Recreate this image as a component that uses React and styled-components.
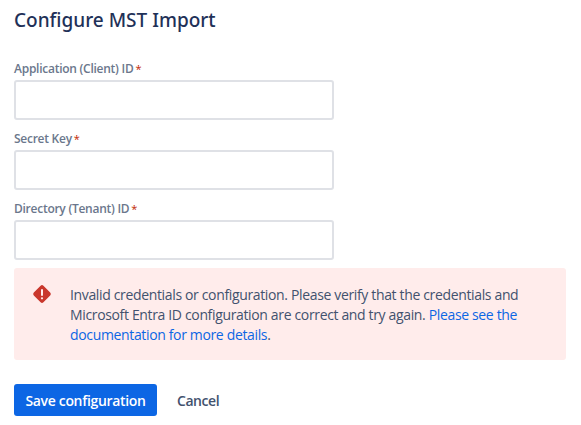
import React from "react";
import styled, { createGlobalStyle } from "styled-components";

const Global = createGlobalStyle`
  html, body { margin: 0; padding: 0; background: #fff; }
  body { font-family: "Open Sans", "Noto Sans", sans-serif; font-size: 14px; color: #172b4d; overflow: hidden; }
`;
const Page = styled.div`
  width: 581px; height: 425px; box-sizing: border-box; padding: 8px 15px 0 14px; display: flex; flex-direction: column;
`;
const Title = styled.h1`
  margin: 0 0 29px; font-size: 19px; line-height: 24px; font-weight: 500; color: #1f3158; font-family: "Noto Sans", sans-serif;
`;
const Form = styled.form`
  display: flex; flex-direction: column; gap: 11px; margin-bottom: 8px;
`;
const Field = styled.div`
  display: flex; flex-direction: column;
`;
const Label = styled.label`
  font-size: 12px; line-height: 16px; font-weight: 600; color: #6b778c; margin-bottom: 3px; letter-spacing: -0.26px;
`;
const Star = styled.span`
  color: #bf2600; margin-left: 2px; font-weight: 400; font-size: 11px;
`;
const Input = styled.input`
  width: 320px; height: 40px; box-sizing: border-box; border: 2px solid #dfe1e6; border-radius: 3px; background: #fff; outline: none; padding: 0 6px;
`;
const Alert = styled.div`
  display: flex; gap: 16px; height: 92px; box-sizing: border-box; padding: 14px 16px; border-radius: 3px; background: #ffeceb;
`;
const IconSlot = styled.div`
  width: 24px; height: 24px; flex: none;
`;
const Message = styled.p`
  margin: 0; padding-top: 3px; font-size: 14px; line-height: 20px; color: #42526e; letter-spacing: -0.35px;
`;
const DocLink = styled.a`
  color: #0c66e4; text-decoration: none;
`;
const Actions = styled.div`
  display: flex; align-items: center; gap: 4px; margin-top: 24px;
`;
const Primary = styled.button`
  height: 32px; width: 143px; padding: 0; border: 0; border-radius: 3px; background: #0c66e4; color: #fff; font: 600 14px "Open Sans", sans-serif; letter-spacing: -0.33px;
`;
const Subtle = styled.button`
  height: 32px; padding: 0 12px 0 16px; border: 0; border-radius: 3px; background: transparent; color: #42526e; font: 600 14px "Open Sans", sans-serif; letter-spacing: -0.45px;
`;

const fields = ["Application (Client) ID", "Secret Key", "Directory (Tenant) ID"];

export default function App() {
  return (
    <Page>
      <Global />
      <Title>Configure MST Import</Title>
      <Form>
        {fields.map((f) => (
          <Field key={f}>
            <Label>{f}<Star>*</Star></Label>
            <Input />
          </Field>
        ))}
      </Form>
      <Alert>
        <IconSlot>
          <svg width="24" height="24" viewBox="0 0 24 24">
            <path fill="#c9372c" fillRule="evenodd" d="M13.41 3.81l6.78 6.78a2 2 0 0 1 0 2.82l-6.78 6.78a2 2 0 0 1-2.82 0l-6.78-6.78a2 2 0 0 1 0-2.82l6.78-6.78a2 2 0 0 1 2.82 0zM12 7a1 1 0 0 0-1 1v5a1 1 0 0 0 2 0V8a1 1 0 0 0-1-1zm0 8.2a1.1 1.1 0 1 0 0 2.2 1.1 1.1 0 0 0 0-2.2z" />
          </svg>
        </IconSlot>
        <Message>
          Invalid credentials or configuration. Please verify that the credentials and Microsoft Entra ID configuration are correct and try again. <DocLink href="#">Please see the documentation for more details</DocLink>.
        </Message>
      </Alert>
      <Actions>
        <Primary type="button">Save configuration</Primary>
        <Subtle type="button">Cancel</Subtle>
      </Actions>
    </Page>
  );
}
